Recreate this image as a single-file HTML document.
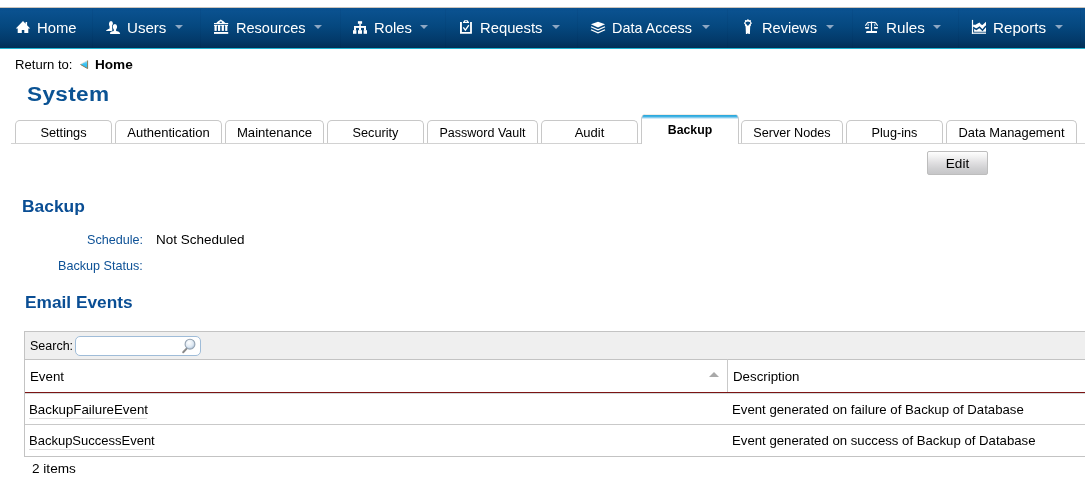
<!DOCTYPE html>
<html><head><meta charset="utf-8">
<style>
*{box-sizing:border-box;margin:0;padding:0}
body{will-change:transform;}
html,body{width:1085px;height:486px;overflow:hidden;background:#fff;font-family:"Liberation Sans",sans-serif;color:#000;position:relative}
.a{position:absolute;white-space:nowrap;line-height:1}
#nav{position:absolute;left:0;top:7px;width:1085px;height:42px;background:linear-gradient(#09508e 0%,#0a518f 8%,#05487f 45%,#033a6a 80%,#022e56 100%);border-top:1px solid #cdc5bc;border-bottom:1px solid #22b5d2}
.sep{position:absolute;top:1px;width:1px;height:39px;background:rgba(0,20,50,0.055)}
.nt{position:absolute;top:12.5px;font-size:14.8px;color:#fff;line-height:1}
.car{position:absolute;top:17px;width:0;height:0;border-left:4.5px solid transparent;border-right:4.5px solid transparent;border-top:4.5px solid #8ea8c4}
.ic{position:absolute;top:12px}
.tab{position:absolute;top:120px;height:23px;border:1px solid #c8c8c8;border-bottom:none;border-radius:5px 5px 0 0;background:#fff;font-size:12px;text-align:center;line-height:1}
.tab span{position:absolute;left:0;right:0;top:6px}
</style></head><body>
<div id="nav">
  <div class="sep" style="left:92px"></div>
  <div class="sep" style="left:200px"></div>
  <div class="sep" style="left:340px"></div>
  <div class="sep" style="left:445px"></div>
  <div class="sep" style="left:577px"></div>
  <div class="sep" style="left:727px"></div>
  <div class="sep" style="left:852px"></div>
  <div class="sep" style="left:958px"></div>
  <div class="sep" style="left:1080px"></div>

  <div class="nt" style="left:37px">Home</div>
  <div class="nt" style="left:127px;font-size:15.1px;top:12px">Users</div>
  <div class="nt" style="left:236px;font-size:14.55px">Resources</div>
  <div class="nt" style="left:374px">Roles</div>
  <div class="nt" style="left:480px">Requests</div>
  <div class="nt" style="left:612px;font-size:14.4px">Data Access</div>
  <div class="nt" style="left:762px;font-size:14.6px">Reviews</div>
  <div class="nt" style="left:886px;font-size:15.2px;top:12px">Rules</div>
  <div class="nt" style="left:993px;font-size:15.2px;top:12px">Reports</div>

<svg style="position:absolute;left:0;top:-8px" width="1085" height="49" viewBox="0 0 1085 49">
 <g fill="#fff">
  <!-- home -->
  <path d="M15.8 28.6 L23 21 L25.6 23.7 L25.6 22 L27.1 22 L27.1 25.3 L30.2 28.6 L28.3 28.6 L28.3 33 L24.3 33 L24.3 30 L21.8 30 L21.8 33 L17.7 33 L17.7 28.6 Z"/>
  <!-- users -->
  <path d="M106 31.1 L106.4 30.2 L108 29.2 L109.6 28.5 L109.6 26.3 Q108.9 25.4 109 23.5 Q109.2 21 111 21 Q112.9 21 112.9 23.5 Q112.9 25.4 112.3 26.3 L112.3 31.1 Z"/>
  <path d="M110.1 34 L110.1 32.4 L111.5 31.6 L113.8 30.9 L113.8 29.4 Q112.6 28.4 112.7 26.6 Q112.8 24.1 114.9 24.1 Q117 24.1 117.1 26.6 Q117.2 28.4 116.1 29.4 L116.1 30.9 L118.3 31.6 L119.6 32.6 L120.2 34 Z" stroke="#044378" stroke-width="1.1" paint-order="stroke"/>
  <!-- resources -->
  <path fill-rule="evenodd" d="M216.3 23.1 L217.8 21.6 L219.3 20.4 L220.8 19.6 L222.3 20.4 L223.8 21.6 L225.3 23.1 Z M219.5 22.2 A1.3 0.75 0 1 0 222.1 22.2 A1.3 0.75 0 1 0 219.5 22.2 Z"/>
  <rect x="214" y="23" width="14.2" height="1.2"/>
  <rect x="214" y="25" width="3.2" height="1"/>
  <rect x="217.6" y="25" width="3" height="1"/>
  <rect x="221.2" y="25" width="3" height="1"/>
  <rect x="224.8" y="25" width="3.2" height="1"/>
  <rect x="214.5" y="25" width="2.2" height="5.9"/>
  <rect x="218" y="25" width="2.2" height="5.9"/>
  <rect x="221.7" y="25" width="2.2" height="5.9"/>
  <rect x="225.2" y="25" width="2.2" height="5.9"/>
  <rect x="214" y="32" width="14.2" height="1.9"/>
  <!-- roles -->
  <rect x="357.9" y="21.2" width="4.2" height="2.6"/>
  <rect x="359.3" y="23.6" width="1.5" height="2.6"/>
  <rect x="354" y="26" width="12" height="1.9"/>
  <rect x="354" y="27.5" width="2" height="3"/>
  <rect x="359" y="27.5" width="2" height="3"/>
  <rect x="364" y="27.5" width="2" height="3"/>
  <rect x="353" y="30.2" width="3.4" height="3.6"/>
  <rect x="358" y="30.2" width="4" height="3.6"/>
  <rect x="363.6" y="30.2" width="3.4" height="3.6"/>
  <!-- requests -->
  <path d="M460 22.1 L461.9 22.1 L461.9 32 L470.1 32 L470.1 22.1 L471.9 22.1 L471.9 33.8 L460 33.8 Z"/>
  <path fill-rule="evenodd" d="M464.2 20.2 L467.8 20.2 L467.9 21.1 L469 21.9 L469 22.9 L463 22.9 L463 21.9 L464.1 21.1 Z M465.1 21.2 L466.9 21.2 L466.9 22 L465.1 22 Z"/>
  <path d="M463.3 27.3 L465.4 30.1 L468.8 25.1" fill="none" stroke="#fff" stroke-width="1.35"/>
  <!-- data access -->
  <path d="M590.9 24.3 L598 21.7 L605.1 24.3 L598 27.5 Z"/>
  <path d="M591 26.7 L598 29.9 L605 26.7" fill="none" stroke="#fff" stroke-width="1.25"/>
  <path d="M591 29.7 L598 32.9 L605 29.7" fill="none" stroke="#fff" stroke-width="1.25"/>
  <!-- reviews -->
  <path fill-rule="evenodd" d="M747.51 19.17 L748.29 19.17 L748.86 19.94 L749.46 20.19 L750.41 20.05 L750.95 20.59 L750.81 21.54 L751.06 22.14 L751.83 22.71 L751.83 23.49 L751.06 24.06 L750.81 24.66 L750.95 25.61 L750.41 26.15 L749.46 26.01 L748.86 26.26 L748.29 27.03 L747.51 27.03 L746.94 26.26 L746.34 26.01 L745.39 26.15 L744.85 25.61 L744.99 24.66 L744.74 24.06 L743.97 23.49 L743.97 22.71 L744.74 22.14 L744.99 21.54 L744.85 20.59 L745.39 20.05 L746.34 20.19 L746.94 19.94 Z M745.3 22.9 Q745.4 21.4 747.9 21.4 Q750.4 21.4 750.5 22.9 L747.9 25.9 Z"/>
  <path d="M745.6 26 L750.2 26 L749.9 34 L748.6 34 L747.9 32.9 L747.2 34 L745.9 34 Z"/>
  <!-- rules -->
  <rect x="867.2" y="21.9" width="8.6" height="1.1"/>
  <circle cx="871.45" cy="22.4" r="0.9"/>
  <path d="M867.6 22.6 L865.3 25.7 M875.4 22.6 L877.7 25.7" stroke="#fff" stroke-width="1.05" fill="none"/>
  <path d="M868.2 23.6 L868.2 26.2 M874.8 23.6 L874.8 26.2" stroke="#fff" stroke-width="0.8" fill="none"/>
  <rect x="870.9" y="22" width="1.15" height="9.4"/>
  <path d="M865 27 L869.1 27 L868.6 28.8 L865.5 28.8 Z"/>
  <path d="M873.9 27 L878 27 L877.5 28.8 L874.4 28.8 Z"/>
  <path d="M866.8 31.1 L877 31.1 L877 33 L866.1 33 L866.1 31.8 Z"/>
  <!-- reports -->
  <rect x="971.9" y="19.9" width="1.2" height="13.9"/>
  <rect x="971.9" y="32.6" width="14.1" height="1.2"/>
  <path d="M973.1 24.8 L975.6 24.8 L977.2 23.7 L979.5 22.5 L981 24.4 L982.5 25.1 L984.1 23.4 L986 21.7 L986 31.8 L974.1 31.8 L974.1 28.5 L973.1 28.5 Z"/>
  <path d="M973.1 27.5 L976.4 29.3 L979.5 27.2 L982.5 30.2 L986 26.1" fill="none" stroke="#04457b" stroke-width="1.5"/>
 </g>
</svg>

  <div class="car" style="left:175px"></div>
  <div class="car" style="left:314px"></div>
  <div class="car" style="left:420px"></div>
  <div class="car" style="left:552px"></div>
  <div class="car" style="left:702px"></div>
  <div class="car" style="left:826px"></div>
  <div class="car" style="left:933px"></div>
  <div class="car" style="left:1055px"></div>
</div>

<div class="a" style="left:15px;top:57.8px;font-size:13.1px">Return to:</div>
<div class="a" style="left:95px;top:57.5px;font-size:13.6px;font-weight:bold">Home</div>

<div class="a" style="left:27px;top:84px;font-size:20px;letter-spacing:0.3px;transform:scaleX(1.13);transform-origin:0 0;font-weight:bold;color:#0b5394">System</div>

<div class="tab" style="left:15px;width:97px"><span style="font-size:12.8px">Settings</span></div>
<div class="tab" style="left:115px;width:107px"><span style="font-size:13px;top:5px">Authentication</span></div>
<div class="tab" style="left:225px;width:99px"><span style="font-size:13.15px;top:5px">Maintenance</span></div>
<div class="tab" style="left:327px;width:97px"><span style="font-size:12.7px">Security</span></div>
<div class="tab" style="left:427px;width:111px"><span style="font-size:12.5px">Password Vault</span></div>
<div class="tab" style="left:541px;width:97px"><span style="font-size:13px;top:5px">Audit</span></div>
<div class="tab" style="left:741px;width:102px"><span style="font-size:12.65px">Server Nodes</span></div>
<div class="tab" style="left:846px;width:97px"><span style="font-size:12.7px">Plug-ins</span></div>
<div class="tab" style="left:946px;width:131px"><span style="font-size:12.9px">Data Management</span></div>
<div style="position:absolute;left:11px;top:143px;width:1074px;height:1px;background:#d2d2d2"></div>
<div class="tab" style="left:641px;top:114px;width:98px;height:30px;border-top:none;background:linear-gradient(#f3ede6 0,#f3ede6 1px,#2ea9dd 1px,#2ea9dd 2px,#40b3e3 2px,#40b3e3 3px,#88cdee 3px,#88cdee 4px,#d2ebf8 4px,#d2ebf8 5px,#fff 5px)"><span style="top:10px;font-weight:bold;font-size:12.3px">Backup</span></div>

<div style="position:absolute;left:927px;top:151px;width:61px;height:24px;border:1px solid #bdbdbd;border-radius:2px;background:linear-gradient(#fefefe,#f3f3f3 20%,#dfdee0 50%,#d0d0d2 75%,#c6c6c8);font-size:13.6px;text-align:center;line-height:23px">Edit</div>

<div class="a" style="left:22px;top:198px;font-size:17.4px;font-weight:bold;color:#0a4e94">Backup</div>
<div class="a" style="left:87px;top:234px;font-size:12.6px;color:#0d5196">Schedule:</div>
<div class="a" style="left:156px;top:233px;font-size:13.5px">Not Scheduled</div>
<div class="a" style="left:58px;top:260px;font-size:12.6px;color:#0d5196">Backup Status:</div>

<div class="a" style="left:25px;top:294px;font-size:17.3px;font-weight:bold;color:#0a4e94">Email Events</div>

<div style="position:absolute;left:24px;top:331px;width:1070px;height:126px;border:1px solid #c3c3c3;border-right:none"></div>
<div style="position:absolute;left:25px;top:332px;width:1060px;height:28px;background:#efefef;border-bottom:1px solid #c3c3c3"></div>
<div class="a" style="left:30px;top:340px;font-size:12.5px">Search:</div>
<div style="position:absolute;left:75px;top:336px;width:126px;height:20px;border:1px solid #9fbcd8;border-radius:5px;background:#fff"></div>

<svg style="position:absolute;left:181px;top:337px" width="18" height="18" viewBox="0 0 18 18">
  <defs><radialGradient id="lg" cx="0.4" cy="0.35" r="0.7"><stop offset="0" stop-color="#ffffff"/><stop offset="0.6" stop-color="#dfe9f3"/><stop offset="1" stop-color="#aac0d6"/></radialGradient></defs>
  <line x1="2.2" y1="15.2" x2="5.6" y2="11.6" stroke="#8a8a8a" stroke-width="2" stroke-linecap="round"/>
  <circle cx="9" cy="7.2" r="4.9" fill="url(#lg)" stroke="#95a3b2" stroke-width="1.1"/>
</svg>
<div style="position:absolute;left:25px;top:392px;width:1060px;height:1px;background:#7c1313"></div><div style="position:absolute;left:25px;top:393px;width:1060px;height:1px;background:#d3dada"></div>
<div style="position:absolute;left:727px;top:359px;width:1px;height:33px;background:#c9c9c9"></div>
<div class="a" style="left:30px;top:370px;font-size:13.3px">Event</div>
<div style="position:absolute;left:709px;top:372px;width:0;height:0;border-left:5px solid transparent;border-right:5px solid transparent;border-bottom:5px solid #a9a9a9"></div>
<div class="a" style="left:733px;top:370px;font-size:13.3px">Description</div>

<div class="a" style="left:29px;top:403px;font-size:13.3px">BackupFailureEvent</div>
<div style="position:absolute;left:29px;top:418px;width:118px;height:1px;background:#dcdcdc"></div>
<div class="a" style="left:732px;top:403px;font-size:13.2px">Event generated on failure of Backup of Database</div>
<div style="position:absolute;left:25px;top:424px;width:1060px;height:1px;background:#c9c9c9"></div>
<div class="a" style="left:29px;top:434px;font-size:13px">BackupSuccessEvent</div>
<div style="position:absolute;left:29px;top:449px;width:124px;height:1px;background:#dcdcdc"></div>
<div class="a" style="left:732px;top:434px;font-size:13.2px">Event generated on success of Backup of Database</div>
<div class="a" style="left:32px;top:461.5px;font-size:13.6px">2 items</div>

<svg style="position:absolute;left:80px;top:60px" width="9" height="9" viewBox="0 0 9 9"><defs><linearGradient id="tg" x1="0" y1="0" x2="0" y2="1"><stop offset="0" stop-color="#a8e4f8"/><stop offset="0.45" stop-color="#3cc4f4"/><stop offset="1" stop-color="#2cb8ee"/></linearGradient></defs><path d="M7.6 0.4 L7.6 8.6 L0.3 4.4 Z" fill="url(#tg)"/><path d="M0.3 4.4 L7.6 8.6 L7.6 0.4" fill="none" stroke="#857248" stroke-width="0.9"/><path d="M0.3 4.4 L7.6 0.4" fill="none" stroke="#e8d8c8" stroke-width="0.6"/></svg>
</body></html>
